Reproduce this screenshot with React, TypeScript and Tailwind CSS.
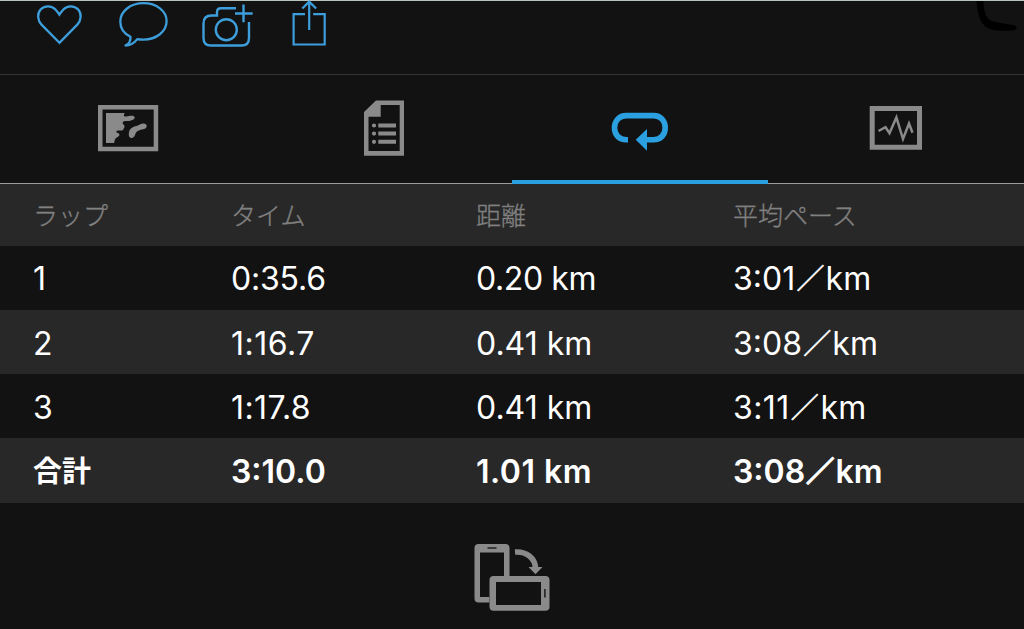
import type { ReactNode } from 'react'
import clsx from 'clsx'

const laps = [
  { lap: '1', time: '0:35.6', distance: '0.20 km', pace: '3:01', timeClass: 'tracking-[-0.2px]', distanceClass: 'tracking-[-0.4px]' },
  { lap: '2', time: '1:16.7', distance: '0.41 km', pace: '3:08', timeClass: 'tracking-[0.5px]' },
  { lap: '3', time: '1:17.8', distance: '0.41 km', pace: '3:11', timeClass: 'tracking-[0.4px]', paceClass: 'tracking-[0.4px]' },
  { lap: '合計', time: '3:10.0', distance: '1.01 km', pace: '3:08', distanceClass: 'tracking-[0.5px]', total: true },
]

function ActionBar() {
  return (
    <div className="relative h-[75px] shrink-0 border-t border-t-[#b9c1bb] border-b border-b-[#353535] pl-8 flex items-start">
      <div className="-mt-px flex gap-7 text-[#3d9edb]">
        {/* Like */}
        <svg width="56" height="52" viewBox="32 0 56 52" fill="none" stroke="currentColor" strokeWidth="2.3">
          <path d="M59.4 42.8 41.5 24.6C37.6 20.6 36.9 13.6 40.6 9.5c3.9-4.2 11-4.2 14.8.1 1.4 1.6 2.8 3.2 4 5 1.2-1.8 2.6-3.4 4-5 3.8-4.3 10.9-4.3 14.8-.1 3.7 4.1 3 11.1-.9 15.1Z" />
        </svg>
        {/* Comment */}
        <svg width="56" height="52" viewBox="116 0 56 52" fill="none" stroke="currentColor" strokeWidth="2.3" strokeLinejoin="round">
          <path d="M125.5 45.6c3.8-2 5.3-4.5 5-8.8C124 33.7 120.3 28 120.3 21.5 120.3 11.2 130.5 3.2 143.5 3.2s23.1 7.7 23.1 17.9c0 10.4-10.2 18.5-23.1 18.5-2.2 0-4.3-.1-6.2-.5-3 3.8-6.8 6.5-11.8 6.5Z" />
        </svg>
        {/* Add photo */}
        <svg width="56" height="52" viewBox="200 0 56 52" fill="none" stroke="currentColor" strokeWidth="2.4">
          <path d="M236 8.3H221c-2.5 0-4 1.5-4 4v3.2h-5.5c-5 0-8 3-8 8V38c0 5 2.5 7.5 7.5 7.5h30.5c5 0 7.5-2.5 7.5-7.5V22" />
          <circle cx="226.3" cy="29.7" r="10.5" />
          <path d="M235 13.5h17.7M243.5 4.5V22.3" />
        </svg>
        {/* Share */}
        <svg width="56" height="52" viewBox="284 0 56 52" fill="none" stroke="currentColor" strokeWidth="2.2">
          <path d="M305 14.2h-11.4v30.3h31.1V14.2h-11.5M309.2 2v28M302.3 8.5l6.9-6.9 6.9 6.9" />
        </svg>
      </div>
      <svg className="absolute right-0 top-0" width="52" height="36" viewBox="972 1 52 36" fill="black">
        <path d="M976.5 0h7c0 8 1.5 15 4.500 18.500 3 3.500 13 4.800 26 6.500 3.500 1 3.500 4.600 0 5.200-14 1.200-24.500.5-29.500-4.500C979 20.500 977 11 976.500 0Z" />
      </svg>
    </div>
  )
}

function Tab({ active, children }: { active?: boolean; children: ReactNode }) {
  return (
    <div
      className={clsx(
        'relative flex items-start justify-center pt-[21px]',
        active ? 'text-[#2ba0e0]' : 'text-[#8a8a8a]',
      )}
    >
      {children}
      {active && <div className="absolute inset-x-0 -bottom-px h-[4px] bg-[#2ba0e0]" />}
    </div>
  )
}

function Tabs() {
  return (
    <div className="h-[109px] shrink-0 grid grid-cols-4 border-b border-[#9a9a9a]">
      <Tab>
        <svg width="64" height="64" viewBox="96 96 64 64" fill="currentColor">
          <path fillRule="evenodd" d="M98 105h60.2v46.3H98ZM102.5 109.5v37.3h51.2v-37.3Z" />
          <path d="M106 113H124.700C124.300 114.200 123.500 115 124 115.900C126.500 117.200 129 115.700 132 115.700C135.200 115.700 135.500 118.500 133 119.800C131 120.800 129.500 121 127.500 121C124.500 120.900 122.500 121.300 122.700 123C123 125 125.500 125.500 124.300 127.500C123.500 128.700 123.700 129.500 122.700 130.300C120.500 131 116.300 129.700 116.300 131.700C116.500 133.200 119.300 132.700 119.400 134.500C119.500 137.200 116 136.800 115 139.500L114 143H106Z" />
          <path d="M129 132.500c.6-4.300 4-5.800 7.500-6.600 2.500-.4 4.500-2.400 7-2.300 4 0 4 4 1.300 5.200-3.800 1.300-7.300 1.200-9 4.300-1 2.200-1.200 4.700-4 4.900-2.700 0-3.400-2.500-2.800-5.500Z" />
        </svg>
      </Tab>
      <Tab>
        <svg width="64" height="64" viewBox="352 96 64 64" fill="currentColor">
          <path fillRule="evenodd" d="M376 100.500h28v55.200h-40V112ZM380.700 105v11.800h-12.200V151h31.200v-46Z" />
          <circle cx="374" cy="125.5" r="2.1" />
          <circle cx="374" cy="133.6" r="2.1" />
          <circle cx="374" cy="141.8" r="2.1" />
          <path d="M378.300 123.500H396v4h-17.700ZM378.300 131.600H396v4h-17.700ZM378.300 139.800H396v4h-17.700Z" />
        </svg>
      </Tab>
      <Tab active>
        <svg width="64" height="64" viewBox="608 96 64 64" fill="none">
          <path d="M628 139.700h-1.800c-7.400 0-11.700-5.200-11.700-12s4.600-12.100 11.700-12.100h27.500c7.100 0 11.500 5.300 11.500 12.100s-4.400 12-11.500 12H646" stroke="currentColor" strokeWidth="5.6" />
          <path d="M635.700 139.800 647 129v21.700Z" fill="currentColor" />
        </svg>
      </Tab>
      <Tab>
        <svg width="64" height="64" viewBox="864 96 64 64" fill="none" stroke="currentColor">
          <path d="M872.200 108.600h47.300v38.600h-47.300Z" strokeWidth="5" />
          <path d="M878.500 131l7-3.800 4 6 6.900-15.800L903 139l6-15.500 3.500 9.300" strokeWidth="2.500" />
        </svg>
      </Tab>
    </div>
  )
}

function LapTable() {
  return (
    <div className="shrink-0">
      <div className="grid grid-cols-[198px_245px_257px_1fr] items-center h-[62px] pl-[33px] pb-[3px] bg-[#282828] text-[25px] leading-[36px] font-light text-[#808080] [-webkit-text-stroke:0.35px_#808080] font-['Noto_Sans_CJK_JP',sans-serif]">
        <span>ラップ</span>
        <span>タイム</span>
        <span>距離</span>
        <span>平均ペース</span>
      </div>
      {laps.map(({ lap, time, distance, pace, timeClass, distanceClass, paceClass, total }, i) => (
        <div
          key={lap}
          className={clsx(
            'grid grid-cols-[198px_245px_257px_1fr] items-center pl-[33px] text-[32px] leading-[48px] text-white whitespace-nowrap',
            i === 0 ? 'pt-[2px]' : 'pt-[3px]',
            i % 2 === 1 && 'bg-[#282828]',
            total ? 'h-[65px] font-semibold' : 'h-16',
          )}
        >
          <span className={clsx(total && 'text-[29px]')}>{lap}</span>
          <span className={timeClass}>{time}</span>
          <span className={distanceClass}>{distance}</span>
          <span className={paceClass}>
            {pace}
            <span
              className={clsx(
                'mx-[1.2px] align-[1px] text-[28px] leading-none',
                total ? '[-webkit-text-stroke:1.6px_white]' : '[-webkit-text-stroke:0.6px_white]',
              )}
            >
              ／
            </span>
            km
          </span>
        </div>
      ))}
    </div>
  )
}

export default function App() {
  return (
    <div className="w-full h-[629px] overflow-hidden flex flex-col bg-[#121212] font-['Inter','Noto_Sans_CJK_JP',sans-serif]">
      <ActionBar />
      <Tabs />
      <LapTable />

      {/* Rotate device hint */}
      <div className="flex-1 flex justify-center pt-[37px]">
        <svg width="80" height="76" viewBox="472 540 80 76" fill="#8a8a8a">
          <path fillRule="evenodd" d="M478.500 544h27c2.500 0 4 1.500 4 4v28H504v-23.400h-24V597h9.300v5.600h-10.800c-2.500 0-4-1.500-4-4V548c0-2.500 1.500-4 4-4Z" />
          <path fillRule="evenodd" d="M493.500 576h52c2.500 0 4 1.500 4 4v26.700c0 2.500-1.500 4-4 4h-52c-2.500 0-4-1.500-4-4V580c0-2.500 1.500-4 4-4ZM496 582v23h45v-23Z" />
          <path d="M487.500 548h9M544.900 589v8.500" stroke="#222" strokeWidth="1.6" />
          <path d="M515 552c11.500-.8 20 6 20.500 16" fill="none" stroke="#8a8a8a" strokeWidth="5.6" />
          <path d="M528.500 567h14l-7 7.300Z" />
        </svg>
      </div>
    </div>
  )
}
